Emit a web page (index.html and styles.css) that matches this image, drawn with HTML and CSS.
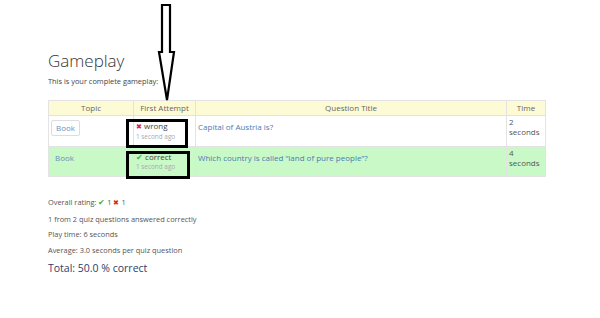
FILE: index.html
```html
<!DOCTYPE html>
<html>
<head>
<meta charset="utf-8">
<link rel="stylesheet" href="styles.css">
</head>
<body>
<div class="page">
  <h1 class="title">Gameplay</h1>
  <p class="lead">This is your complete gameplay:</p>
  <table class="game">
    <thead>
      <tr class="head">
        <th class="c-topic">Topic</th>
        <th class="c-first">First Attempt</th>
        <th class="c-title">Question Title</th>
        <th class="c-time">Time</th>
      </tr>
    </thead>
    <tbody>
      <tr class="row">
        <td><span class="btn">Book</span></td>
        <td class="attempt">
          <div class="res"><span class="x">&#10006;</span> wrong</div>
          <div class="ago">1 second ago</div>
        </td>
        <td><a class="q">Capital of Austria is?</a></td>
        <td class="time">2<br>seconds</td>
      </tr>
      <tr class="row ok">
        <td><span class="plain">Book</span></td>
        <td class="attempt">
          <div class="res"><span class="v">&#10004;</span> correct</div>
          <div class="ago">1 second ago</div>
        </td>
        <td><a class="q">Which country is called “land of pure people”?</a></td>
        <td class="time">4<br>seconds</td>
      </tr>
    </tbody>
  </table>
  <div class="summary">
    <p>Overall rating: <span class="v">&#10004;</span> 1 <span class="x">&#10006;</span> 1</p>
    <p>1 from 2 quiz questions answered correctly</p>
    <p>Play time: 6 seconds</p>
    <p>Average: 3.0 seconds per quiz question</p>
    <p class="total">Total: 50.0 % correct</p>
  </div>
</div>
<div class="mark mark1"></div>
<div class="mark mark2"></div>
<svg class="arrow" width="24" height="104" viewBox="0 0 24 104">
  <path d="M6 5 H14 V52 H18 L11 100 L3 52 H6 Z" fill="#fff" stroke="#000" stroke-width="2.2" stroke-linejoin="miter"/>
</svg>
</body>
</html>
```
FILE: styles.css
```css
html, body { margin: 0; padding: 0; background: #fff; }
body { font-family: "Open Sans", "Liberation Sans", sans-serif; color: #555; font-size: 7.4px; }
.page { padding: 50px 0 0 48px; width: 498px; }
.title { margin: 0; font-size: 17px; font-weight: 300; color: #333; line-height: 22px; }
.lead { margin: 4px 0 0; font-size: 7.4px; line-height: 10px; color: #444; }
.game { margin-top: 14px; width: 498px; border-collapse: collapse; font-size: 8px; }
.game th, .game td { border: 1px solid #e3e3e3; padding: 0 2px; vertical-align: top; line-height: 10px; }
.head { background: #fdfbd6; }
.game th { font-weight: 400; text-align: center; height: 14px; vertical-align: middle; color: #666; }
.c-topic { width: 80px; }
.c-first { width: 57px; }
.c-time { width: 34px; }
.row td { height: 31px; padding-top: 4px; box-sizing: border-box; }
.row.ok td { height: 30px; }
.row.ok { background: #c9f9c6; }
.btn { display: inline-block; border: 1px solid #ddd; border-radius: 2px; padding: 2px 4px; color: #6a8fbf; background: #fff; margin-left: 0; }
.plain { display: inline-block; padding: 2px 4px; color: #6a8fbf; }
.attempt { padding-left: 4px; }
.res { color: #444; margin-top: 1px; }
.ago { color: #aaa; font-size: 6.4px; line-height: 10px; }
.x { color: #e02222; font-size: 6.5px; }
.v { color: #3fae3f; font-size: 7.5px; }
.q { color: #4a7bb5; display: inline-block; padding-top: 2px; }
.time { color: #555; }
.row .time { padding-top: 1px; }
.summary { margin-top: 20px; }
.summary p { margin: 0 0 5.5px; line-height: 10px; color: #555; }
.summary .total { font-size: 10.5px; color: #2c3e6a; margin-top: 6px; line-height: 14px; }
.mark { position: absolute; border: 3px solid #000; box-sizing: border-box; }
.mark1 { left: 126px; top: 119px; width: 62px; height: 29px; }
.mark2 { left: 126px; top: 151px; width: 64px; height: 28px; }
.arrow { position: absolute; left: 156px; top: 0; }
```
